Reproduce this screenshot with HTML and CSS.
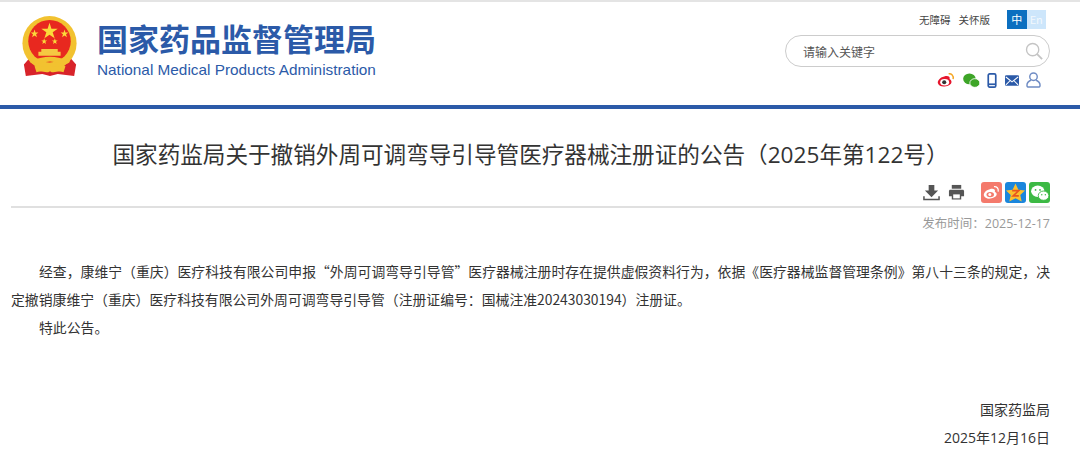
FILE: index.html
```html
<!DOCTYPE html>
<html lang="zh-CN">
<head>
    <meta charset="UTF-8">
    <title>国家药监局关于撤销外周可调弯导引导管医疗器械注册证的公告</title>
    <link rel="stylesheet" href="styles.css">
</head>
<body>
    <header class="header">
        <div class="brand">
            <svg class="emblem" viewBox="0 0 60 64" width="58" height="62">
                <path d="M10 42 L3 50 L5 62 L22 60 L30 62 L38 60 L55 62 L57 50 L50 42 Z" fill="#d8232a"/>
                <circle cx="29.500" cy="28" r="28" fill="#f2c230"/>
                <circle cx="29.500" cy="26" r="22" fill="#e8281f"/>
                <polygon points="29.500,7 31.500,13 38,13 32.800,16.800 34.800,23 29.500,19.200 24.200,23 26.200,16.800 21,13 27.500,13" fill="#fbd93a"/>
                <polygon points="14,14 15,17 18,17 15.600,18.800 16.500,21.800 14,20 11.500,21.800 12.400,18.800 10,17 13,17" fill="#fbd93a"/>
                <polygon points="45,14 46,17 49,17 46.600,18.800 47.500,21.800 45,20 42.500,21.800 43.400,18.800 41,17 44,17" fill="#fbd93a"/>
                <polygon points="24,23 24.800,25.200 27,25.200 25.200,26.600 25.900,28.800 24,27.500 22.100,28.800 22.800,26.600 21,25.200 23.200,25.200" fill="#fbd93a"/>
                <polygon points="35,23 35.800,25.200 38,25.200 36.200,26.600 36.900,28.800 35,27.500 33.100,28.800 33.800,26.600 32,25.200 34.200,25.200" fill="#fbd93a"/>
                <path d="M21 34 H38 V37 H41 V41 H18 V37 H21 Z" fill="#f5c842"/>
                <path d="M8 42 C14 47 20 42 30 42 C40 42 46 47 52 42 L50 48 C44 52 38 47 30 47 C22 47 16 52 10 48 Z" fill="#f2c230"/>
                <path d="M14 52 C20 50 25 55 30 51 C35 55 40 50 46 52 L44 58 C38 56 34 60 30 57 C26 60 22 56 16 58 Z" fill="#f2c230"/>
            </svg>
            <div class="brand-text">
                <div class="brand-cn">国家药品监督管理局</div>
                <div class="brand-en">National Medical Products Administration</div>
            </div>
        </div>
        <div class="tools">
            <div class="top-links">
                <a>无障碍</a>
                <a>关怀版</a>
                <div class="lang">
                    <span class="lang-cn">中</span>
                    <span class="lang-en">En</span>
                </div>
            </div>
            <div class="search">
                <span>请输入关键字</span>
                <svg viewBox="0 0 20 20" width="18" height="18" fill="none" stroke="#c4c4c4" stroke-width="1.500">
                    <circle cx="8.500" cy="8.500" r="6.800"/>
                    <path d="M13.500 13.500 L19 19" stroke-width="2"/>
                </svg>
            </div>
            <div class="social">
                <svg viewBox="0 0 20 18" width="18" height="16">
                    <path d="M8 5 C3 6 0 10 1 13 C2 16 6 17 10 16 C14 15 17 13 16 10 C15.500 8.500 14 8.500 14 8 C15 5 12 4 8 5 Z" fill="#e6162d"/>
                    <ellipse cx="8.500" cy="11.500" rx="5" ry="3.600" fill="#fff"/>
                    <circle cx="8" cy="11.500" r="2.300" fill="#333"/>
                    <path d="M13 2 C16 1.500 19 4 18 8" fill="none" stroke="#f5a623" stroke-width="1.600"/>
                </svg>
                <svg viewBox="0 0 20 18" width="17" height="15" fill="#3ea528">
                    <ellipse cx="7.500" cy="7" rx="7.500" ry="6.500"/>
                    <ellipse cx="14" cy="12" rx="6" ry="5.200" stroke="#fff" stroke-width="1"/>
                </svg>
                <svg viewBox="0 0 10 16" width="10" height="15" fill="none" stroke="#2b5aa8" stroke-width="1.800">
                    <rect x="1" y="1" width="8" height="14" rx="1.500"/>
                    <path d="M1 12 H9"/>
                </svg>
                <svg viewBox="0 0 16 12" width="14" height="11">
                    <rect width="16" height="12" rx="1.500" fill="#2b5aa8"/>
                    <path d="M1 2 L8 7.500 L15 2 M1 11 L6 6 M15 11 L10 6" fill="none" stroke="#fff" stroke-width="1.200"/>
                </svg>
                <svg viewBox="0 0 16 17" width="15" height="16" fill="none" stroke="#6f8cc4" stroke-width="1.500">
                    <circle cx="8" cy="5" r="4"/>
                    <path d="M5.500 8.500 C2.500 10 1 12 1 14 C1 15.500 2 16 3 16 H13 C14 16 15 15.500 15 14 C15 12 13.500 10 10.500 8.500"/>
                </svg>
            </div>
        </div>
    </header>

    <main class="article">
        <h1 class="title">国家药监局关于撤销外周可调弯导引导管医疗器械注册证的公告（<span class="num">2025</span>年第<span class="num">122</span>号）</h1>
        <div class="actions">
            <svg viewBox="0 0 18 18" width="17" height="17" fill="#555">
                <path d="M6 1 H12 V7 H16 L9 14 L2 7 H6 Z"/>
                <path d="M1 13 V16.500 H17 V13" fill="none" stroke="#555" stroke-width="1.600"/>
            </svg>
            <svg class="print" viewBox="0 0 18 18" width="17" height="17" fill="#555">
                <path d="M4 1 H14 V5 H4 Z"/>
                <path d="M2.500 6 H15.500 C16.500 6 17 6.700 17 7.500 V13 H14 V16.500 H4 V13 H1 V7.500 C1 6.700 1.500 6 2.500 6 Z"/>
                <rect x="5.500" y="11" width="7" height="4.200" fill="#fff"/>
            </svg>
            <span class="share share-weibo">
                <svg viewBox="0 0 20 18" width="17" height="15">
                    <path d="M8 5 C3 6 0 10 1 13 C2 16 6 17 10 16 C14 15 17 13 16 10 C15.500 8.500 14 8.500 14 8 C15 5 12 4 8 5 Z" fill="#fff"/>
                    <ellipse cx="8.500" cy="11.500" rx="4.500" ry="3.200" fill="#f47a6c"/>
                    <circle cx="8" cy="11.500" r="1.800" fill="#fff"/>
                    <path d="M13 2 C16 1.500 19 4 18 8" fill="none" stroke="#fff" stroke-width="1.600"/>
                </svg>
            </span>
            <span class="share share-qzone">
                <svg viewBox="0 0 20 20" width="19" height="19">
                    <polygon points="10,0.500 13,7 20,7.800 15,12.500 16.500,19.500 10,16 3.500,19.500 5,12.500 0,7.800 7,7" fill="#fbc02d"/>
                    <path d="M6.500 8 H13.500 L7.500 13.500 H13.500" fill="none" stroke="#e8561f" stroke-width="1.700"/>
                </svg>
            </span>
            <span class="share share-wechat">
                <svg viewBox="0 0 20 18" width="18" height="16" fill="#fff">
                    <ellipse cx="7.500" cy="7" rx="7.500" ry="6.500"/>
                    <ellipse cx="14" cy="12" rx="6" ry="5.200" stroke="#3cb944" stroke-width="1"/>
                    <circle cx="5" cy="5.500" r="1" fill="#3cb944"/>
                    <circle cx="10" cy="5.500" r="1" fill="#3cb944"/>
                    <circle cx="12" cy="11" r="0.800" fill="#3cb944"/>
                    <circle cx="16" cy="11" r="0.800" fill="#3cb944"/>
                </svg>
            </span>
        </div>
        <div class="date-line">发布时间：<span class="num">2025-12-17</span></div>
        <div class="body-text">
            <p>经查，康维宁（重庆）医疗科技有限公司申报“外周可调弯导引导管”医疗器械注册时存在提供虚假资料行为，依据《医疗器械监督管理条例》第八十三条的规定，决定撤销康维宁（重庆）医疗科技有限公司外周可调弯导引导管（注册证编号：国械注准20243030194）注册证。</p>
            <p>特此公告。</p>
        </div>
        <div class="signature">
            <p>国家药监局</p>
            <p><span class="num">2025</span>年<span class="num">12</span>月<span class="num">16</span>日</p>
        </div>
    </main>
</body>
</html>
```

FILE: styles.css
```css
* {
    box-sizing: border-box;
}

html, body {
    height: 466px;
    overflow: hidden;
}

body {
    margin: 0;
    font-family: "Noto Sans CJK SC", sans-serif;
    background-color: #fff;
    color: #333;
}

.num {
    font-family: "Open Sans", sans-serif;
    line-height: 1;
}

.header {
    height: 109px;
    border-top: 2px solid #e4e4e4;
    border-bottom: 4px solid #2b5aa8;
    display: flex;
    justify-content: space-between;
    padding: 0 30px 0 21px;
}

.brand {
    display: flex;
    align-items: flex-start;
    padding-top: 14px;
}

.emblem {
    flex-shrink: 0;
}

.brand-text {
    margin-left: 18px;
    color: #2b5aa8;
}

.brand-cn {
    font-size: 31px;
    font-weight: 700;
    line-height: 40px;
    margin-top: 2px;
}

.brand-en {
    font-family: "Liberation Sans", sans-serif;
    font-size: 15.350px;
    line-height: 18px;
    margin-top: 3px;
}

.tools {
    width: 265px;
    display: flex;
    flex-direction: column;
    align-items: flex-end;
}

.top-links {
    display: flex;
    align-items: center;
    padding: 4px 4px 0 0;
    height: 31px;
    font-size: 10.500px;
    color: #444;
}

.top-links a {
    margin-right: 8px;
}

.lang {
    display: flex;
    margin-left: 9px;
    font-size: 11px;
    line-height: 19px;
    text-align: center;
}

.lang span {
    width: 19.500px;
    height: 19px;
}

.lang-cn {
    background-color: #0b6fc0;
    color: #fff;
}

.lang-en {
    background-color: #cde6fb;
    color: #f2f8fd;
}

.search {
    width: 265px;
    height: 32px;
    margin-top: 2px;
    border: 1px solid #ccc;
    border-radius: 16px;
    display: flex;
    align-items: center;
    justify-content: space-between;
    padding: 0 6px 0 17px;
    font-size: 12px;
    color: #555;
}

.social {
    display: flex;
    align-items: center;
    gap: 7.500px;
    height: 26px;
    padding-right: 9px;
}

.article {
    padding: 0 30px 0 11px;
}

.title {
    margin: 0;
    padding-top: 29px;
    font-size: 22.600px;
    font-weight: 400;
    line-height: 32px;
    text-align: center;
    color: #333;
}

.actions {
    display: flex;
    justify-content: flex-end;
    align-items: center;
    height: 38px;
    padding-top: 9px;
    border-bottom: 2px solid #e0e0e0;
}

.print {
    margin: 0 13px 0 8px;
}

.share {
    width: 21px;
    height: 21px;
    margin-left: 3px;
    border-radius: 3px;
    display: flex;
    align-items: center;
    justify-content: center;
}

.share-weibo {
    background-color: #f47a6c;
}

.share-qzone {
    background-color: #1a86dc;
}

.share-wechat {
    background-color: #3cb944;
}

.date-line {
    margin-top: 5px;
    font-size: 12.500px;
    line-height: 20px;
    text-align: right;
    color: #999;
}

.body-text {
    margin-top: 24px;
    font-size: 13.850px;
    line-height: 28px;
    color: #333;
}

.body-text p {
    margin: 0;
    text-indent: 28px;
    text-align: justify;
}

.signature {
    margin-top: 54px;
    font-size: 14px;
    line-height: 28px;
    text-align: right;
}

.signature p {
    margin: 0;
}
```
